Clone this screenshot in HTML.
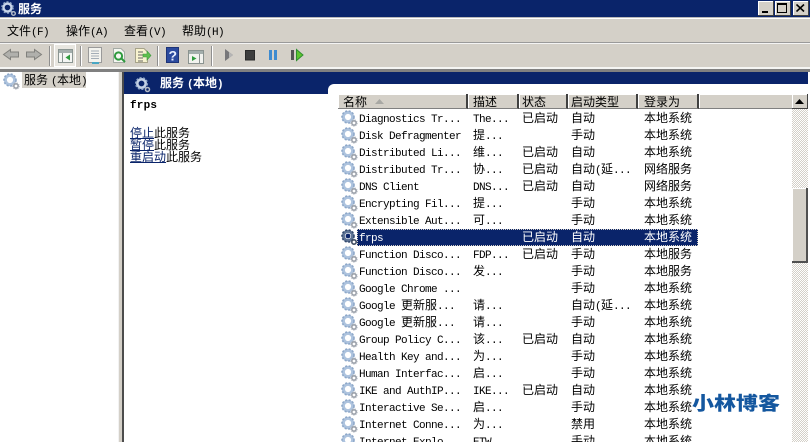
<!DOCTYPE html>
<html>
<head>
<meta charset="utf-8">
<style>
html,body{margin:0;padding:0;width:810px;height:442px;overflow:hidden;background:#fff}
*{box-sizing:border-box}
body{position:relative;font-family:"Liberation Sans","WenQuanYi Zen Hei","Noto Sans CJK SC",sans-serif;font-size:12px;color:#000}
.a{position:absolute}
.t{position:absolute;white-space:nowrap;line-height:14px;height:14px;font-family:"WenQuanYi Zen Hei","Noto Sans CJK SC",sans-serif;font-size:12px}
.l{font-family:"Liberation Mono",monospace;font-size:11px;letter-spacing:-0.6px}
.n{left:359px}.d{left:473px}.s{left:522px}.b{left:571px}.o{left:644px}
.h{position:absolute;top:94px;height:15px;background:#d4d0c8;border-right:2px solid #404040;border-bottom:1px solid #808080;font-family:"WenQuanYi Zen Hei","Noto Sans CJK SC",sans-serif;font-size:12px;line-height:16px;padding-left:5px;white-space:nowrap;overflow:hidden;box-shadow:inset 1px 1px 0 #fff}
.g{position:absolute;left:341px;width:17px;height:17px}
.ic{position:absolute}
</style>
</head>
<body>
<svg width="0" height="0" style="position:absolute">
<defs>
<g id="gear">
<circle cx="7" cy="7" r="4.6" fill="none" stroke="#adc3de" stroke-width="3"/>
<circle cx="7" cy="7" r="6" fill="none" stroke="#8ea8c9" stroke-width="1.6" stroke-dasharray="2 1.6"/>
<circle cx="7" cy="7" r="2.4" fill="#fff"/>
<circle cx="13" cy="13" r="2.2" fill="none" stroke="#9aa0a9" stroke-width="1.6"/>
<circle cx="13" cy="13" r="3.2" fill="none" stroke="#b8bdc5" stroke-width="1" stroke-dasharray="1.2 1"/>
</g>
<g id="gearsel">
<circle cx="7" cy="7" r="4.6" fill="none" stroke="#5d7394" stroke-width="3"/>
<circle cx="7" cy="7" r="6" fill="none" stroke="#33496e" stroke-width="1.6" stroke-dasharray="2 1.6"/>
<circle cx="7" cy="7" r="2.4" fill="#0a246a"/>
<circle cx="13" cy="13" r="2.2" fill="none" stroke="#3d4a60" stroke-width="1.6"/>
</g>
</defs>
</svg>

<!-- title bar -->
<div class="a" style="left:0;top:0;width:810px;height:17px;background:#0a246a"></div>
<svg class="ic" style="left:1px;top:1px" width="16" height="16"><circle cx="6.500" cy="6.500" r="4" fill="none" stroke="#c9d6ea" stroke-width="2.400"/><circle cx="6.500" cy="6.500" r="5.600" fill="none" stroke="#8fa6c8" stroke-width="1.400" stroke-dasharray="2 1.6"/><circle cx="12.500" cy="12.500" r="1.800" fill="none" stroke="#b5bcc8" stroke-width="1.400"/></svg>
<div class="t" style="left:18px;top:2px;color:#fff;font-weight:bold">服务</div>
<div class="a" style="left:758px;top:1px;width:16px;height:15px;background:#d4d0c8;border-right:1px solid #404040;border-bottom:1px solid #404040;box-shadow:inset 1px 1px 0 #fff"><div class="a" style="left:4px;top:10px;width:6px;height:2px;background:#000"></div></div>
<div class="a" style="left:775px;top:1px;width:16px;height:15px;background:#d4d0c8;border-right:1px solid #404040;border-bottom:1px solid #404040;box-shadow:inset 1px 1px 0 #fff"><div class="a" style="left:2px;top:2px;width:10px;height:10px;border:1px solid #000;border-top-width:2px"></div></div>
<div class="a" style="left:793px;top:1px;width:16px;height:15px;background:#d4d0c8;border-right:1px solid #404040;border-bottom:1px solid #404040;box-shadow:inset 1px 1px 0 #fff"><svg class="ic" style="left:3px;top:3px" width="9" height="8"><path d="M0.500 0.500L8 7.500M8 0.500L0.500 7.500" stroke="#000" stroke-width="1.600"/></svg></div>

<!-- menu -->
<div class="a" style="left:0;top:17px;width:810px;height:2px;background:#fff;border-top:1px solid #b9b9b9"></div>
<div class="a" style="left:0;top:19px;width:810px;height:24px;background:#d4d0c8"></div>
<div class="t" style="left:7px;top:24px">文件<span class="l">(F)</span></div>
<div class="t" style="left:66px;top:24px">操作<span class="l">(A)</span></div>
<div class="t" style="left:124px;top:24px">查看<span class="l">(V)</span></div>
<div class="t" style="left:182px;top:24px">帮助<span class="l">(H)</span></div>
<div class="a" style="left:0;top:42px;width:810px;height:2px;background:#9a9a9a;border-bottom:1px solid #f4f4f4"></div>

<!-- toolbar -->
<div class="a" style="left:0;top:44px;width:810px;height:24px;background:#d4d0c8"></div>
<div class="a" style="left:0;top:67px;width:810px;height:2px;background:#f5f5f3"></div>
<div class="a" style="left:0;top:69px;width:810px;height:3px;background:#808080"></div>
<svg class="ic" style="left:0;top:44px" width="340" height="24">
<path d="M3.500 10.500L10.500 5.500V8H18.500V13H10.500V15.500Z" fill="#b0b0ac" stroke="#80807c"/>
<path d="M41.500 10.500L34.500 5.500V8H26.500V13H34.500V15.500Z" fill="#b0b0ac" stroke="#80807c"/>
<path d="M49.500 2V22M80.500 2V22M157.500 2V22M211.500 2V22" stroke="#8f8f8f" stroke-width="1"/>
<path d="M50.500 2V22M81.500 2V22M158.500 2V22M212.500 2V22" stroke="#fff" stroke-width="1"/>
<rect x="54.500" y="0.500" width="21" height="22" fill="#e8e6e0" stroke="#fff"/>
<rect x="58.500" y="5.500" width="14" height="13" fill="#f4f6f4" stroke="#8a9592"/>
<rect x="59" y="6" width="13" height="3" fill="#a3aeac"/>
<path d="M62.500 9V18" stroke="#8a9592"/>
<path d="M70 10.500V16.500L65.500 13.500Z" fill="#2f9a3e"/>
<rect x="88.500" y="3.500" width="13" height="15" fill="#f3f3ee" stroke="#9a9a9a"/>
<path d="M91 7H99M91 9.500H99M91 12H99M91 14.500H99" stroke="#a3adb7"/>
<rect x="92" y="18" width="7" height="2" fill="#48a7c4"/>
<path d="M113.500 4.500H121L124.500 8V18.500H113.500Z" fill="#f5f7f2" stroke="#a5aba5"/>
<circle cx="118.500" cy="12" r="3.600" fill="none" stroke="#2f9a3e" stroke-width="2"/>
<path d="M121 14L125 18" stroke="#2f9a3e" stroke-width="2"/>
<path d="M135.500 4.500H144L147.500 8V18.500H135.500Z" fill="#f8f3cf" stroke="#a7a38a"/>
<path d="M138 8H143M138 11H143M138 14H143M138 17H143" stroke="#666"/>
<path d="M143 10H147V7L151 11.500L147 16V13H143Z" fill="#5fbf4c" stroke="#3c9a3c" stroke-width=".6"/>
<rect x="166.500" y="3.500" width="12" height="15" fill="#2b4a9e" stroke="#1d3377"/>
<text x="168.500" y="16.500" font-family="Liberation Sans" font-weight="bold" font-size="14" fill="#e8efff">?</text>
<rect x="188.500" y="6.500" width="15" height="13" fill="#f2f3ef" stroke="#8a9390"/>
<rect x="189" y="7" width="14" height="3" fill="#a3aeac"/>
<path d="M199.500 10V19" stroke="#8a9390"/>
<path d="M192 12V17L196.500 14.500Z" fill="#2f9a3e"/>
<path d="M225 5V17L233 11Z" fill="#77777a"/>
<path d="M229 8L233 11L229 14Z" fill="#b5b5b5"/>
<rect x="245.500" y="6.500" width="9" height="9.500" fill="#3d3d3d" stroke="#2a2a2a"/>
<rect x="269" y="6" width="3" height="10" fill="#3d8bd0"/>
<rect x="274" y="6" width="3" height="10" fill="#3d8bd0"/>
<rect x="291" y="6" width="3" height="10" fill="#555"/>
<path d="M296.500 5.500L303 11L296.500 16.500Z" fill="#5cc42f" stroke="#2f8d2f"/>
</svg>

<!-- left pane -->
<div class="a" style="left:118px;top:72px;width:6px;height:370px;background:#d4d0c8;border-left:1px solid #f2f2f2;border-right:2px solid #4c4c4c"></div>
<svg class="ic" style="left:3px;top:73px" width="18" height="18"><use href="#gear"/></svg>
<div class="a" style="left:22px;top:72px;width:64px;height:16px;background:#d4d0c8"></div>
<div class="t" style="left:24px;top:73px">服务<span class="l" style="margin-left:3px">(</span>本地<span class="l">)</span></div>

<!-- right header -->
<div class="a" style="left:124px;top:72px;width:684px;height:22px;background:#0a246a"></div>
<div class="a" style="left:328px;top:84px;width:480px;height:10px;background:#fff;border-top-left-radius:6px"></div>
<svg class="ic" style="left:134px;top:76px" width="18" height="18"><circle cx="7.500" cy="7.500" r="4.200" fill="none" stroke="#c3d0e4" stroke-width="2.600"/><circle cx="7.500" cy="7.500" r="5.800" fill="none" stroke="#8ea5c8" stroke-width="1.500" stroke-dasharray="2 1.6"/><circle cx="13.500" cy="13.500" r="2" fill="none" stroke="#b4bac5" stroke-width="1.500"/></svg>
<div class="t" style="left:160px;top:76px;color:#fff;font-weight:bold">服务<span class="l" style="margin-left:3px;font-weight:bold">(</span>本地<span class="l" style="font-weight:bold">)</span></div>

<!-- description -->
<div class="t l" style="left:130px;top:99px;font-weight:bold;letter-spacing:0.2px">frps</div>
<div class="t" style="left:130px;top:126px"><span style="color:#0a246a;text-decoration:underline">停止</span>此服务</div>
<div class="t" style="left:130px;top:138px"><span style="color:#0a246a;text-decoration:underline">暂停</span>此服务</div>
<div class="t" style="left:130px;top:150px"><span style="color:#0a246a;text-decoration:underline">重启动</span>此服务</div>

<!-- list header -->
<div class="h" style="left:338px;width:130px">名称<svg style="position:absolute;left:37px;top:5px" width="9" height="5"><path d="M4.500 0L9 5H0Z" fill="#a8a8a4"/></svg></div>
<div class="h" style="left:468px;width:51px">描述</div>
<div class="h" style="left:519px;width:49px;padding-left:3px">状态</div>
<div class="h" style="left:568px;width:70px;padding-left:3px">启动类型</div>
<div class="h" style="left:638px;width:61px;padding-left:6px">登录为</div>
<div class="h" style="left:699px;width:93px;border-right:0"></div>

<!-- selection -->
<div class="a" style="left:357px;top:229px;width:341px;height:17px;background:#0a246a;outline:1px dotted #d4d0c8;outline-offset:-1px"></div>

<!-- rows -->
<svg class="g" style="top:110px"><use href="#gear"/></svg><div class="t n" style="top:111px"><span class="l">Diagnostics Tr...</span></div><div class="t d" style="top:111px"><span class="l">The...</span></div><div class="t s" style="top:111px">已启动</div><div class="t b" style="top:111px">自动</div><div class="t o" style="top:111px">本地系统</div>
<svg class="g" style="top:127px"><use href="#gear"/></svg><div class="t n" style="top:128px"><span class="l">Disk Defragmenter</span></div><div class="t d" style="top:128px">提<span class="l">...</span></div><div class="t b" style="top:128px">手动</div><div class="t o" style="top:128px">本地系统</div>
<svg class="g" style="top:144px"><use href="#gear"/></svg><div class="t n" style="top:145px"><span class="l">Distributed Li...</span></div><div class="t d" style="top:145px">维<span class="l">...</span></div><div class="t s" style="top:145px">已启动</div><div class="t b" style="top:145px">自动</div><div class="t o" style="top:145px">本地系统</div>
<svg class="g" style="top:161px"><use href="#gear"/></svg><div class="t n" style="top:162px"><span class="l">Distributed Tr...</span></div><div class="t d" style="top:162px">协<span class="l">...</span></div><div class="t s" style="top:162px">已启动</div><div class="t b" style="top:162px">自动<span class="l">(</span>延<span class="l">...</span></div><div class="t o" style="top:162px">网络服务</div>
<svg class="g" style="top:178px"><use href="#gear"/></svg><div class="t n" style="top:179px"><span class="l">DNS Client</span></div><div class="t d" style="top:179px"><span class="l">DNS...</span></div><div class="t s" style="top:179px">已启动</div><div class="t b" style="top:179px">自动</div><div class="t o" style="top:179px">网络服务</div>
<svg class="g" style="top:195px"><use href="#gear"/></svg><div class="t n" style="top:196px"><span class="l">Encrypting Fil...</span></div><div class="t d" style="top:196px">提<span class="l">...</span></div><div class="t b" style="top:196px">手动</div><div class="t o" style="top:196px">本地系统</div>
<svg class="g" style="top:212px"><use href="#gear"/></svg><div class="t n" style="top:213px"><span class="l">Extensible Aut...</span></div><div class="t d" style="top:213px">可<span class="l">...</span></div><div class="t b" style="top:213px">手动</div><div class="t o" style="top:213px">本地系统</div>
<svg class="g" style="top:229px"><use href="#gearsel"/></svg><div class="t n" style="top:230px;color:#fff"><span class="l">frps</span></div><div class="t s" style="top:230px;color:#fff">已启动</div><div class="t b" style="top:230px;color:#fff">自动</div><div class="t o" style="top:230px;color:#fff">本地系统</div>
<svg class="g" style="top:246px"><use href="#gear"/></svg><div class="t n" style="top:247px"><span class="l">Function Disco...</span></div><div class="t d" style="top:247px"><span class="l">FDP...</span></div><div class="t s" style="top:247px">已启动</div><div class="t b" style="top:247px">手动</div><div class="t o" style="top:247px">本地服务</div>
<svg class="g" style="top:263px"><use href="#gear"/></svg><div class="t n" style="top:264px"><span class="l">Function Disco...</span></div><div class="t d" style="top:264px">发<span class="l">...</span></div><div class="t b" style="top:264px">手动</div><div class="t o" style="top:264px">本地服务</div>
<svg class="g" style="top:280px"><use href="#gear"/></svg><div class="t n" style="top:281px"><span class="l">Google Chrome ...</span></div><div class="t b" style="top:281px">手动</div><div class="t o" style="top:281px">本地系统</div>
<svg class="g" style="top:297px"><use href="#gear"/></svg><div class="t n" style="top:298px"><span class="l">Google </span>更新服<span class="l">...</span></div><div class="t d" style="top:298px">请<span class="l">...</span></div><div class="t b" style="top:298px">自动<span class="l">(</span>延<span class="l">...</span></div><div class="t o" style="top:298px">本地系统</div>
<svg class="g" style="top:314px"><use href="#gear"/></svg><div class="t n" style="top:315px"><span class="l">Google </span>更新服<span class="l">...</span></div><div class="t d" style="top:315px">请<span class="l">...</span></div><div class="t b" style="top:315px">手动</div><div class="t o" style="top:315px">本地系统</div>
<svg class="g" style="top:331px"><use href="#gear"/></svg><div class="t n" style="top:332px"><span class="l">Group Policy C...</span></div><div class="t d" style="top:332px">该<span class="l">...</span></div><div class="t s" style="top:332px">已启动</div><div class="t b" style="top:332px">自动</div><div class="t o" style="top:332px">本地系统</div>
<svg class="g" style="top:348px"><use href="#gear"/></svg><div class="t n" style="top:349px"><span class="l">Health Key and...</span></div><div class="t d" style="top:349px">为<span class="l">...</span></div><div class="t b" style="top:349px">手动</div><div class="t o" style="top:349px">本地系统</div>
<svg class="g" style="top:365px"><use href="#gear"/></svg><div class="t n" style="top:366px"><span class="l">Human Interfac...</span></div><div class="t d" style="top:366px">启<span class="l">...</span></div><div class="t b" style="top:366px">手动</div><div class="t o" style="top:366px">本地系统</div>
<svg class="g" style="top:382px"><use href="#gear"/></svg><div class="t n" style="top:383px"><span class="l">IKE and AuthIP...</span></div><div class="t d" style="top:383px"><span class="l">IKE...</span></div><div class="t s" style="top:383px">已启动</div><div class="t b" style="top:383px">自动</div><div class="t o" style="top:383px">本地系统</div>
<svg class="g" style="top:399px"><use href="#gear"/></svg><div class="t n" style="top:400px"><span class="l">Interactive Se...</span></div><div class="t d" style="top:400px">启<span class="l">...</span></div><div class="t b" style="top:400px">手动</div><div class="t o" style="top:400px">本地系统</div>
<svg class="g" style="top:416px"><use href="#gear"/></svg><div class="t n" style="top:417px"><span class="l">Internet Conne...</span></div><div class="t d" style="top:417px">为<span class="l">...</span></div><div class="t b" style="top:417px">禁用</div><div class="t o" style="top:417px">本地系统</div>
<svg class="g" style="top:433px"><use href="#gear"/></svg><div class="t n" style="top:434px"><span class="l">Internet Explo...</span></div><div class="t d" style="top:434px"><span class="l">ETW...</span></div><div class="t b" style="top:434px">手动</div><div class="t o" style="top:434px">本地系统</div>

<!-- scrollbar -->
<svg class="ic" style="left:792px;top:109px" width="16" height="333"><defs><pattern id="ck" width="2" height="2" patternUnits="userSpaceOnUse"><rect width="2" height="2" fill="#fff"/><rect width="1" height="1" fill="#d4d0c8"/><rect x="1" y="1" width="1" height="1" fill="#d4d0c8"/></pattern></defs><rect width="16" height="333" fill="url(#ck)"/></svg>
<div class="a" style="left:792px;top:94px;width:16px;height:15px;background:#d4d0c8;border-right:1px solid #404040;border-bottom:1px solid #404040;box-shadow:inset 1px 1px 0 #fff"><svg class="ic" style="left:3px;top:5px" width="9" height="5"><path d="M4.500 0L9 5H0Z" fill="#000"/></svg></div>
<div class="a" style="left:792px;top:188px;width:16px;height:75px;background:#d4d0c8;border-right:2px solid #505050;border-bottom:2px solid #505050;box-shadow:inset 1px 1px 0 #fff"></div>

<!-- watermark -->
<div class="a" style="left:692px;top:393px;white-space:nowrap;font-family:'Noto Sans CJK SC',sans-serif;font-weight:900;font-size:22px;line-height:22px;color:#14579f;transform:scaleY(.85);transform-origin:0 0">小林博客</div>
</body>
</html>
